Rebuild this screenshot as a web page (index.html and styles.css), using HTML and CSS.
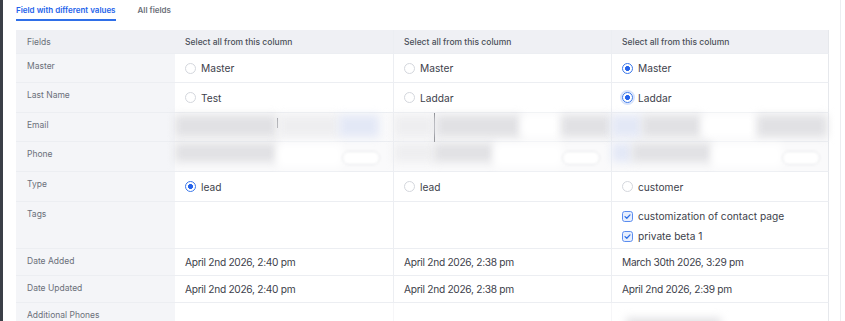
FILE: index.html
```html
<!DOCTYPE html>
<html>
<head>
<meta charset="utf-8">
<link rel="stylesheet" href="styles.css">
</head>
<body>
<div class="page">
  <div class="strip"></div>
  <div class="main">
    <nav class="tabs">
      <span class="tab active">Field with different values</span>
      <span class="tab">All fields</span>
    </nav>
    <div class="grid">
      <div class="lbl head">Fields</div>
      <div class="cell head">Select all from this column</div>
      <div class="cell head">Select all from this column</div>
      <div class="cell head last">Select all from this column</div>

      <div class="lbl">Master</div>
      <div class="cell"><span class="radio"></span>Master</div>
      <div class="cell"><span class="radio"></span>Master</div>
      <div class="cell last"><span class="radio on"></span>Master</div>

      <div class="lbl">Last Name</div>
      <div class="cell"><span class="radio"></span>Test</div>
      <div class="cell"><span class="radio"></span>Laddar</div>
      <div class="cell last"><span class="radio on focus"></span>Laddar</div>

      <div class="lbl">Email</div>
      <div class="cell blur-cell">
        <span class="blob b-gray w102"></span><span class="caret"></span><span class="blob b-light w60"></span><span class="blob b-blue w40"></span>
      </div>
      <div class="cell blur-cell">
        <span class="blob b-light w40"></span><span class="caret tall"></span><span class="blob b-gray w85"></span><span class="blob b-white w40"></span><span class="blob b-gray w50"></span>
      </div>
      <div class="cell blur-cell last">
        <span class="blob b-blue w30"></span><span class="blob b-gray w60"></span><span class="blob b-white w55"></span><span class="blob b-gray w70"></span>
      </div>

      <div class="lbl">Phone</div>
      <div class="cell blur-cell">
        <span class="blob b-gray w102 short"></span><span class="blob b-white w65"></span><span class="pill"></span>
      </div>
      <div class="cell blur-cell">
        <span class="blob b-light w40 short"></span><span class="blob b-gray w60 short"></span><span class="blob b-white w68"></span><span class="pill"></span>
      </div>
      <div class="cell blur-cell last">
        <span class="blob b-blue w20 short"></span><span class="blob b-gray w80 short"></span><span class="blob b-white w70"></span><span class="pill"></span>
      </div>

      <div class="lbl">Type</div>
      <div class="cell"><span class="radio on"></span>lead</div>
      <div class="cell"><span class="radio"></span>lead</div>
      <div class="cell last"><span class="radio"></span>customer</div>

      <div class="lbl">Tags</div>
      <div class="cell"></div>
      <div class="cell"></div>
      <div class="cell last tags">
        <div class="tag"><svg class="check" viewBox="0 0 11 11" width="11" height="11"><rect x="0.5" y="0.5" width="10" height="10" rx="2.2" fill="#e8effd" stroke="#5b8def"/><path d="M3 5.6 L4.8 7.3 L8 3.9" fill="none" stroke="#2f6fe4" stroke-width="1.3" stroke-linecap="round" stroke-linejoin="round"/></svg>customization of contact page</div>
        <div class="tag"><svg class="check" viewBox="0 0 11 11" width="11" height="11"><rect x="0.5" y="0.5" width="10" height="10" rx="2.2" fill="#e8effd" stroke="#5b8def"/><path d="M3 5.6 L4.8 7.3 L8 3.9" fill="none" stroke="#2f6fe4" stroke-width="1.3" stroke-linecap="round" stroke-linejoin="round"/></svg>private beta 1</div>
      </div>

      <div class="lbl">Date Added</div>
      <div class="cell date">April 2nd 2026, 2:40 pm</div>
      <div class="cell date">April 2nd 2026, 2:38 pm</div>
      <div class="cell date last">March 30th 2026, 3:29 pm</div>

      <div class="lbl">Date Updated</div>
      <div class="cell date">April 2nd 2026, 2:40 pm</div>
      <div class="cell date">April 2nd 2026, 2:38 pm</div>
      <div class="cell date last">April 2nd 2026, 2:39 pm</div>

      <div class="lbl">Additional Phones</div>
      <div class="cell"></div>
      <div class="cell nob"></div>
      <div class="cell last nob"><span class="blob b-gray w95 low"></span></div>
    </div>
  </div>
  <div class="rail"></div>
</div>
</body>
</html>
```

FILE: styles.css
```css
* { box-sizing: border-box; }

body {
  margin: 0;
  background: #ffffff;
  font-family: Inter, "Noto Sans", sans-serif;
  color: #3d414b;
}

.page {
  display: flex;
  height: 321px;
  overflow: hidden;
}

.strip {
  width: 3px;
  flex: none;
  background: #3b3f47;
}

.main {
  flex: none;
  width: 826px;
  padding-left: 13px;
}

.rail {
  flex: none;
  width: 1px;
  margin-left: 11px;
  background: #eceef1;
}

.tabs {
  display: flex;
  gap: 22px;
  height: 30px;
}

.tab {
  font-size: 8px;
  font-weight: 600;
  line-height: 10px;
  padding: 5px 0 4px;
  color: #6b7079;
  height: 21px;
}

.tab.active {
  color: #2463eb;
  border-bottom: 2px solid #2f6fe8;
}

.grid {
  display: grid;
  grid-template-columns: 159px 218px 218px 218px;
  grid-template-rows: 24px 29px 30px 29px 30px 30px 47px 27px 27px 27px;
}

.lbl {
  background: #f4f5f8;
  border-bottom: 1px solid #eceef2;
  font-size: 8.5px;
  line-height: 10px;
  color: #6b707a;
  padding: 7px 0 0 11px;
}

.lbl.head {
  background: #eff0f4;
  padding-top: 1px;
  display: flex;
  align-items: center;
}

.cell {
  display: flex;
  align-items: center;
  padding-left: 10px;
  border-bottom: 1px solid #eceef2;
  border-left: 1px solid #eceef2;
  font-size: 10.2px;
  color: #3d414b;
  background: #ffffff;
  white-space: nowrap;
}

.cell:nth-child(4n+2) { border-left: none; }

.cell.last { border-right: 1px solid #e6e8ec; }

.cell.head {
  background: #eff0f4;
  font-size: 8.5px;
  font-weight: 500;
  color: #4a4f59;
  padding-top: 1px;
}

.cell.date { letter-spacing: -0.3px; }

.cell.nob { border-bottom: none; border-left-color: #f6f6f8; }

.radio {
  width: 11px;
  height: 11px;
  border-radius: 50%;
  border: 1px solid #d4d7dd;
  background: #fff;
  margin-right: 5px;
  flex: none;
}

.radio.on {
  border-color: #3b78ea;
  background: radial-gradient(circle, #2563eb 0 2.2px, #ffffff 2.7px);
}

.radio.focus {
  box-shadow: 0 0 0 2px #d7e3fb;
}

.tags {
  flex-direction: column;
  align-items: flex-start;
  justify-content: center;
  gap: 8px;
  padding-top: 2px;
}

.tag {
  display: flex;
  align-items: center;
  line-height: 12px;
}

.check {
  margin-right: 5px;
  flex: none;
}

/* redacted (blurred) cells */
.blur-cell {
  padding-left: 0;
  align-items: stretch;
  background: #fafafb;
}

.blob {
  flex: none;
  filter: blur(4px);
  margin: 2px 0 4px;
}

.blob.short { margin: 1px 0 9px; }
.blob.low { height: 16px; align-self: flex-end; margin: 0 0 -4px 4px; }

.b-gray { background: #e1e1e4; }
.b-light { background: #eeeef0; }
.b-white { background: #ffffff; }
.b-blue { background: #e3e8f6; }

.w20 { width: 20px; }
.w30 { width: 30px; }
.w40 { width: 40px; }
.w50 { width: 50px; }
.w55 { width: 55px; }
.w60 { width: 60px; }
.w65 { width: 65px; }
.w68 { width: 68px; }
.w70 { width: 70px; }
.w80 { width: 80px; }
.w85 { width: 85px; }
.w95 { width: 95px; }
.w102 { width: 102px; }

.caret {
  flex: none;
  width: 1px;
  margin: 5px 1px 13px 0;
  background: #5a5d63;
}

.caret.tall {
  margin: 0 1px -20px 0;
  background: #6a6d73;
}

.pill {
  flex: none;
  width: 38px;
  height: 14px;
  align-self: flex-end;
  margin-bottom: 6px;
  border: 1px solid #e6e7ea;
  border-radius: 7px;
  background: #ffffff;
  filter: blur(0.8px);
}
```
